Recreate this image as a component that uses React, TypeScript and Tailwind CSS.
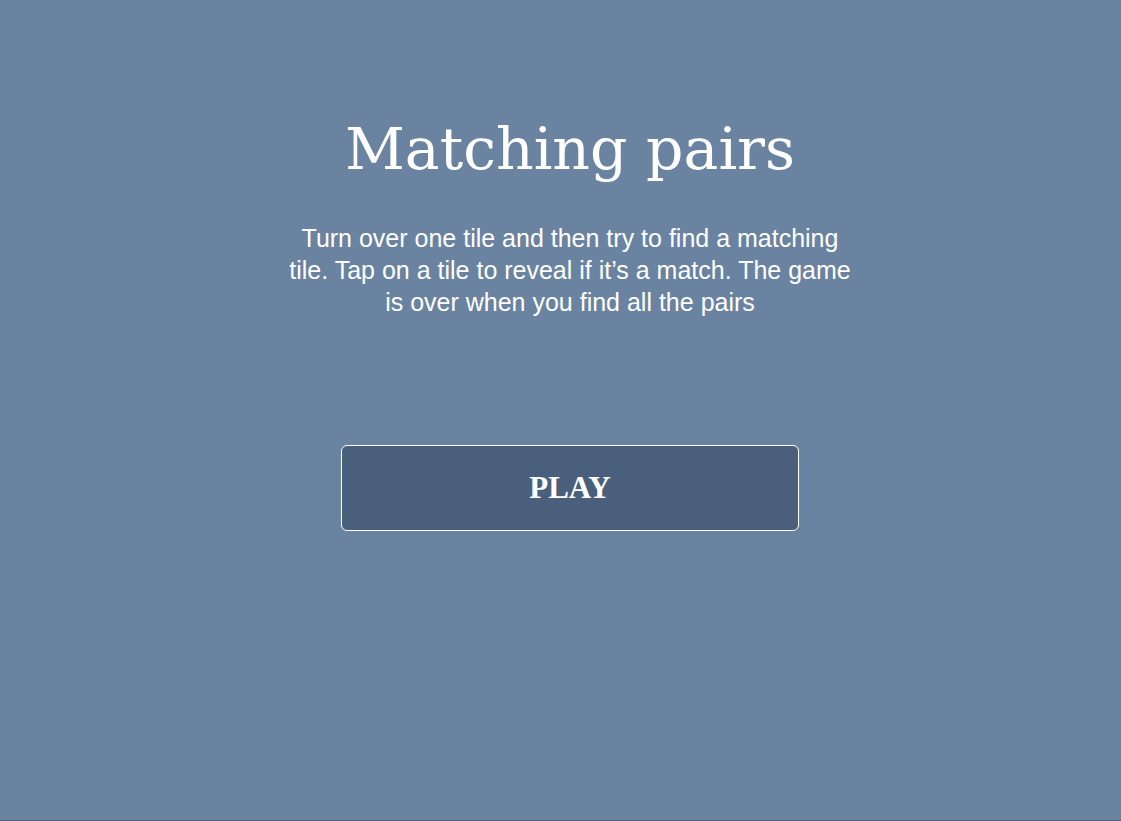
export default function App() {
  return (
    <div className="min-h-[821px] flex flex-col bg-[#6a83a0] border-b border-[#4f647e] text-white">
      <main className="flex-1 flex flex-col items-center pl-[19px] pt-[107px]">
        <h1 className="font-['DejaVu_Serif',Georgia,serif] text-[58.5px] leading-[84px] font-normal">
          Matching pairs
        </h1>
        <p className="mt-[31px] w-[575px] text-center font-['Liberation_Sans',Arial,sans-serif] text-[25px] leading-[32px]">
          Turn over one tile and then try to find a matching tile. Tap on a tile to reveal if it’s a match. The game is over when you find all the pairs
        </p>
        <button className="mt-[127px] w-[458px] h-[86px] rounded-md border border-white bg-[#4a5f7c] font-['Liberation_Serif',Georgia,serif] text-[31px] font-bold">
          PLAY
        </button>
      </main>
    </div>
  );
}
